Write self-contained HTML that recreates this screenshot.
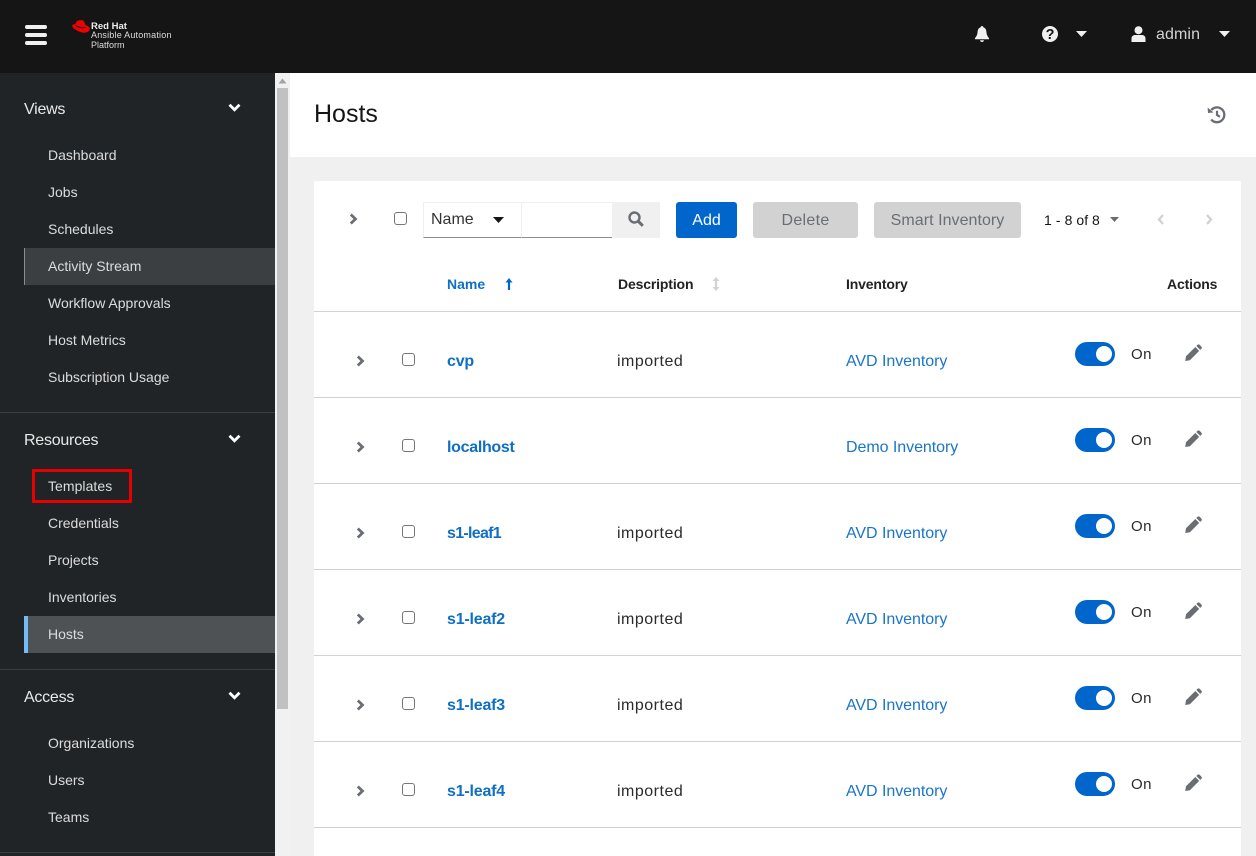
<!DOCTYPE html>
<html><head><meta charset="utf-8"><title>Hosts</title>
<style>
*{box-sizing:border-box}
html,body{margin:0;padding:0;width:1256px;height:856px;overflow:hidden;background:#f0f0f0;font-family:"Liberation Sans",sans-serif;color:#151515}
.a{position:absolute;white-space:nowrap}
svg{position:absolute;display:block}
.sec{position:absolute;left:24px;font-size:16px;color:#e8e8e8;line-height:20px;letter-spacing:-.25px}
.nav{position:absolute;left:48px;font-size:14px;color:#dcdcdc;line-height:18px}
.hr{position:absolute;left:0;width:275px;height:1px;background:#3c3f42}
.row{position:absolute;left:314px;width:927px;height:86px;border-bottom:1px solid #d2d2d2;background:#fff}
.nm{position:absolute;left:133px;top:40px;font-size:16px;line-height:20px;font-weight:bold;color:#0f6fc5;letter-spacing:-.2px}
.ds{position:absolute;left:303px;top:40px;font-size:16px;line-height:20px;color:#2b2b2b;letter-spacing:.5px}
.iv{position:absolute;left:532px;top:40px;font-size:16px;line-height:20px;color:#1a75c9;letter-spacing:-.05px}
.cb{position:absolute;left:88px;top:41px;width:13px;height:13px;border:1px solid #767676;border-radius:3px;background:#fff}
.tg{position:absolute;left:761px;top:30px;width:40px;height:24px;border-radius:12px;background:#06c}
.tg i{position:absolute;left:21px;top:4px;width:16px;height:16px;border-radius:50%;background:#fff}
.on{position:absolute;left:817px;top:33px;font-size:15px;line-height:20px;color:#2b2b2b;letter-spacing:.5px}
.th{position:absolute;top:276px;font-size:14px;line-height:17px;font-weight:bold;color:#222;letter-spacing:-.15px}
.btn{position:absolute;top:202px;height:36px;border-radius:3px;font-size:16px;line-height:37px;text-align:center}
</style></head><body>

<div class="a" style="left:0;top:0;width:1256px;height:73px;background:#151515"></div>
<div class="a" style="left:25px;top:25px;width:22px;height:4px;background:#f0f0f0;border-radius:2px"></div>
<div class="a" style="left:25px;top:33px;width:22px;height:4px;background:#f0f0f0;border-radius:2px"></div>
<div class="a" style="left:25px;top:41px;width:22px;height:4px;background:#f0f0f0;border-radius:2px"></div>

<svg style="left:72px;top:20px" width="18" height="13" viewBox="0 0 18 13"><path d="M4.500 1.600C5.600 .2 8.500 -.2 10.800.4 12 .8 12.700 2.800 13.500 5 15.500 5.700 17.800 7 17.800 8.800 17.800 11.500 14.500 13 11.500 12.700 7.500 12.300 .2 8.700.2 5.600.2 4.600 1.500 4 3.200 4.300Z" fill="#e00"/><path d="M3.300 5.200C6 7.300 10.300 8.400 13.800 7.300" stroke="#151515" stroke-width="1" fill="none"/></svg>
<div class="a" style="left:91px;top:21px;font-size:9.500px;line-height:11px;font-weight:bold;color:#eee">Red Hat</div>
<div class="a" style="left:91px;top:30px;font-size:9px;line-height:11px;color:#ddd;letter-spacing:.2px">Ansible Automation</div>
<div class="a" style="left:91px;top:40px;font-size:9px;line-height:11px;color:#ddd">Platform</div>

<svg style="left:974px;top:25px" width="16" height="18" viewBox="0 0 16 18"><path d="M8 1C8.800 1 9.300 1.500 9.300 2.300 11.500 3 12.300 4.800 12.500 7.500 12.700 10.300 14 11.800 15 13.100 15.300 13.700 15 14.300 14.300 14.300H1.700C1 14.300 .7 13.700 1 13.100 2 11.800 3.300 10.300 3.500 7.500 3.700 4.800 4.500 3 6.700 2.300 6.700 1.500 7.200 1 8 1ZM6.100 15.200H9.900C9.900 16.300 9 17 8 17 7 17 6.100 16.300 6.100 15.200Z" fill="#f0f0f0"/></svg>
<svg style="left:1042px;top:26px" width="16" height="16" viewBox="0 0 16 16"><circle cx="8" cy="8" r="8" fill="#f0f0f0"/><text x="8" y="13" font-family="Liberation Sans" font-size="14.500" font-weight="bold" text-anchor="middle" fill="#151515">?</text></svg>
<svg style="left:1076px;top:31px" width="11" height="6" viewBox="0 0 11 6"><path d="M0 0H11L5.500 6Z" fill="#f0f0f0"/></svg>
<svg style="left:1131px;top:26px" width="15" height="16" viewBox="0 0 15 16"><circle cx="7.500" cy="4.200" r="4" fill="#f0f0f0"/><path d="M0.500 16V12.500C0.500 10 2.500 9 4 9H11C12.500 9 14.500 10 14.500 12.500V16Z" fill="#f0f0f0"/></svg>
<div class="a" style="left:1156px;top:25px;font-size:16px;line-height:20px;color:#d2d2d2;letter-spacing:.1px">admin</div>
<svg style="left:1219px;top:31px" width="11" height="6" viewBox="0 0 11 6"><path d="M0 0H11L5.500 6Z" fill="#f0f0f0"/></svg>

<div class="a" style="left:0;top:73px;width:275px;height:783px;background:#212427"></div>
<div class="a" style="left:275px;top:73px;width:15px;height:783px;background:#f1f1f1"></div>
<div class="a" style="left:277px;top:88px;width:11px;height:621px;background:#c1c1c1"></div>
<svg style="left:278px;top:78px" width="9" height="6" viewBox="0 0 9 6"><path d="M0.500 5.500H8.500L4.500 0.500Z" fill="#a3a3a3"/></svg>

<div class="sec" style="top:100px">Views</div>
<svg style="left:228px;top:103px" width="13" height="9" viewBox="0 0 13 9"><path d="M1.500 1.800L6.500 6.800 11.500 1.800" stroke="#fff" stroke-width="2.800" fill="none"/></svg>
<div class="nav" style="top:146px">Dashboard</div>
<div class="nav" style="top:183px">Jobs</div>
<div class="nav" style="top:220px">Schedules</div>
<div class="a" style="left:24px;top:248px;width:251px;height:37px;background:#3c3f42;border-left:1px solid #8a8d90"></div>
<div class="nav" style="top:257px">Activity Stream</div>
<div class="nav" style="top:294px">Workflow Approvals</div>
<div class="nav" style="top:331px">Host Metrics</div>
<div class="nav" style="top:368px">Subscription Usage</div>
<div class="hr" style="top:412px"></div>

<div class="sec" style="top:431px">Resources</div>
<svg style="left:228px;top:434px" width="13" height="9" viewBox="0 0 13 9"><path d="M1.500 1.800L6.500 6.800 11.500 1.800" stroke="#fff" stroke-width="2.800" fill="none"/></svg>
<div class="a" style="left:32px;top:469px;width:100px;height:34px;border:3px solid #e60000;border-radius:1px"></div>
<div class="nav" style="top:477px;letter-spacing:.05px">Templates</div>
<div class="nav" style="top:514px">Credentials</div>
<div class="nav" style="top:551px">Projects</div>
<div class="nav" style="top:588px">Inventories</div>
<div class="a" style="left:24px;top:616px;width:251px;height:37px;background:#4f5255;border-left:4px solid #73bcf7"></div>
<div class="nav" style="top:625px">Hosts</div>
<div class="hr" style="top:669px"></div>

<div class="sec" style="top:688px">Access</div>
<svg style="left:228px;top:691px" width="13" height="9" viewBox="0 0 13 9"><path d="M1.500 1.800L6.500 6.800 11.500 1.800" stroke="#fff" stroke-width="2.800" fill="none"/></svg>
<div class="nav" style="top:734px">Organizations</div>
<div class="nav" style="top:771px">Users</div>
<div class="nav" style="top:808px">Teams</div>
<div class="hr" style="top:852px"></div>

<div class="a" style="left:290px;top:73px;width:966px;height:84px;background:#fff"></div>
<div class="a" style="left:314px;top:99px;font-size:25px;line-height:30px;color:#151515">Hosts</div>
<svg style="left:1207px;top:105px" width="20" height="19" viewBox="0 0 20 19"><path d="M4.300 5A7.400 7.400 0 1 1 4.200 14.500" stroke="#6a6e73" stroke-width="2.300" fill="none"/><path d="M.6 2.500L1 8 6.500 7.500Z" fill="#6a6e73"/><path d="M10 5.800V10L13 11.800" stroke="#6a6e73" stroke-width="2.200" fill="none"/></svg>

<div class="a" style="left:314px;top:181px;width:927px;height:675px;background:#fff"></div>

<svg style="left:349px;top:213px" width="9" height="12" viewBox="0 0 9 12"><path d="M1.800 1.500L6.500 6 1.800 10.500" stroke="#6a6e73" stroke-width="2.800" fill="none"/></svg>
<div class="a" style="left:394px;top:212px;width:13px;height:13px;border:1px solid #767676;border-radius:3px;background:#fff"></div>
<div class="a" style="left:423px;top:202px;width:99px;height:36px;border:1px solid #f0f0f0;border-bottom:1px solid #8a8d90"></div>
<div class="a" style="left:431px;top:210px;font-size:16px;line-height:20px;color:#333">Name</div>
<svg style="left:493px;top:217px" width="11" height="6" viewBox="0 0 11 6"><path d="M0 0H11L5.500 6Z" fill="#151515"/></svg>
<div class="a" style="left:522px;top:202px;width:90px;height:36px;border-top:1px solid #f0f0f0;border-bottom:1px solid #8a8d90"></div>
<div class="a" style="left:612px;top:202px;width:48px;height:36px;background:#f0f0f0"></div>
<svg style="left:628px;top:211px" width="16" height="16" viewBox="0 0 16 16"><circle cx="6.500" cy="6.500" r="5" stroke="#6a6e73" stroke-width="2.400" fill="none"/><path d="M10.200 10.200L14.800 14.800" stroke="#6a6e73" stroke-width="3"/></svg>

<div class="btn" style="left:676px;width:61px;background:#06c;color:#fff">Add</div>
<div class="btn" style="left:753px;width:105px;background:#d2d2d2;color:#6a6e73;letter-spacing:.3px">Delete</div>
<div class="btn" style="left:874px;width:147px;background:#d2d2d2;color:#6a6e73;letter-spacing:.05px">Smart Inventory</div>
<div class="a" style="left:1044px;top:211px;font-size:14px;line-height:18px;color:#151515"><span style="letter-spacing:.1px">1 - 8</span> of <span style="letter-spacing:.1px">8</span></div>
<svg style="left:1110px;top:217px" width="9" height="5" viewBox="0 0 9 5"><path d="M0 0H9L4.500 5Z" fill="#6a6e73"/></svg>
<svg style="left:1157px;top:214px" width="8" height="11" viewBox="0 0 8 11"><path d="M6 1L2 5.500 6 10" stroke="#d2d2d2" stroke-width="2.400" fill="none"/></svg>
<svg style="left:1205px;top:214px" width="8" height="11" viewBox="0 0 8 11"><path d="M2 1L6 5.500 2 10" stroke="#d2d2d2" stroke-width="2.400" fill="none"/></svg>

<div class="th" style="left:447px;color:#0f6fc5;letter-spacing:0">Name</div>
<svg style="left:505px;top:278px" width="8" height="13" viewBox="0 0 8 13"><path d="M4 12V2" stroke="#06c" stroke-width="2.200"/><path d="M0.500 4.500L4 0 7.500 4.500Z" fill="#06c"/></svg>
<div class="th" style="left:618px">Description</div>
<svg style="left:712px;top:277px" width="8" height="14" viewBox="0 0 8 14"><path d="M4 2V12" stroke="#d2d2d2" stroke-width="2.200"/><path d="M0.500 4L4 0 7.500 4ZM0.500 10L4 14 7.500 10Z" fill="#d2d2d2"/></svg>
<div class="th" style="left:846px">Inventory</div>
<div class="th" style="left:1167px">Actions</div>
<div class="a" style="left:314px;top:311px;width:927px;height:1px;background:#d2d2d2"></div>

<div class="row" style="top:312px"><svg style="left:42px;top:43px" width="9" height="12" viewBox="0 0 9 12"><path d="M1.800 1.500L6.500 6 1.800 10.500" stroke="#6a6e73" stroke-width="2.800" fill="none"/></svg><div class="cb"></div><div class="nm">cvp</div><div class="ds">imported</div><div class="iv">AVD Inventory</div><div class="tg"><i></i></div><div class="on">On</div><svg style="left:870px;top:32px" width="18" height="18" viewBox="0 0 18 18"><path d="M1.200 17L2 12.300 11.300 3 15.200 6.900 5.900 16.200ZM12.300 2L13.500 .8C14.100 .2 15 .2 15.600 .8L17.400 2.600C18 3.200 18 4.100 17.400 4.700L16.200 5.900Z" fill="#6a6e73"/></svg></div>
<div class="row" style="top:398px"><svg style="left:42px;top:43px" width="9" height="12" viewBox="0 0 9 12"><path d="M1.800 1.500L6.500 6 1.800 10.500" stroke="#6a6e73" stroke-width="2.800" fill="none"/></svg><div class="cb"></div><div class="nm" style="letter-spacing:-.3px">localhost</div><div class="iv">Demo Inventory</div><div class="tg"><i></i></div><div class="on">On</div><svg style="left:870px;top:32px" width="18" height="18" viewBox="0 0 18 18"><path d="M1.200 17L2 12.300 11.300 3 15.200 6.900 5.900 16.200ZM12.300 2L13.500 .8C14.100 .2 15 .2 15.600 .8L17.400 2.600C18 3.200 18 4.100 17.400 4.700L16.200 5.900Z" fill="#6a6e73"/></svg></div>
<div class="row" style="top:484px"><svg style="left:42px;top:43px" width="9" height="12" viewBox="0 0 9 12"><path d="M1.800 1.500L6.500 6 1.800 10.500" stroke="#6a6e73" stroke-width="2.800" fill="none"/></svg><div class="cb"></div><div class="nm" style="letter-spacing:-.7px">s1-leaf1</div><div class="ds">imported</div><div class="iv">AVD Inventory</div><div class="tg"><i></i></div><div class="on">On</div><svg style="left:870px;top:32px" width="18" height="18" viewBox="0 0 18 18"><path d="M1.200 17L2 12.300 11.300 3 15.200 6.900 5.900 16.200ZM12.300 2L13.500 .8C14.100 .2 15 .2 15.600 .8L17.400 2.600C18 3.200 18 4.100 17.400 4.700L16.200 5.900Z" fill="#6a6e73"/></svg></div>
<div class="row" style="top:570px"><svg style="left:42px;top:43px" width="9" height="12" viewBox="0 0 9 12"><path d="M1.800 1.500L6.500 6 1.800 10.500" stroke="#6a6e73" stroke-width="2.800" fill="none"/></svg><div class="cb"></div><div class="nm">s1-leaf2</div><div class="ds">imported</div><div class="iv">AVD Inventory</div><div class="tg"><i></i></div><div class="on">On</div><svg style="left:870px;top:32px" width="18" height="18" viewBox="0 0 18 18"><path d="M1.200 17L2 12.300 11.300 3 15.200 6.900 5.900 16.200ZM12.300 2L13.500 .8C14.100 .2 15 .2 15.600 .8L17.400 2.600C18 3.200 18 4.100 17.400 4.700L16.200 5.900Z" fill="#6a6e73"/></svg></div>
<div class="row" style="top:656px"><svg style="left:42px;top:43px" width="9" height="12" viewBox="0 0 9 12"><path d="M1.800 1.500L6.500 6 1.800 10.500" stroke="#6a6e73" stroke-width="2.800" fill="none"/></svg><div class="cb"></div><div class="nm">s1-leaf3</div><div class="ds">imported</div><div class="iv">AVD Inventory</div><div class="tg"><i></i></div><div class="on">On</div><svg style="left:870px;top:32px" width="18" height="18" viewBox="0 0 18 18"><path d="M1.200 17L2 12.300 11.300 3 15.200 6.900 5.900 16.200ZM12.300 2L13.500 .8C14.100 .2 15 .2 15.600 .8L17.400 2.600C18 3.200 18 4.100 17.400 4.700L16.200 5.900Z" fill="#6a6e73"/></svg></div>
<div class="row" style="top:742px"><svg style="left:42px;top:43px" width="9" height="12" viewBox="0 0 9 12"><path d="M1.800 1.500L6.500 6 1.800 10.500" stroke="#6a6e73" stroke-width="2.800" fill="none"/></svg><div class="cb"></div><div class="nm">s1-leaf4</div><div class="ds">imported</div><div class="iv">AVD Inventory</div><div class="tg"><i></i></div><div class="on">On</div><svg style="left:870px;top:32px" width="18" height="18" viewBox="0 0 18 18"><path d="M1.200 17L2 12.300 11.300 3 15.200 6.900 5.900 16.200ZM12.300 2L13.500 .8C14.100 .2 15 .2 15.600 .8L17.400 2.600C18 3.200 18 4.100 17.400 4.700L16.200 5.900Z" fill="#6a6e73"/></svg></div>

</body></html>
